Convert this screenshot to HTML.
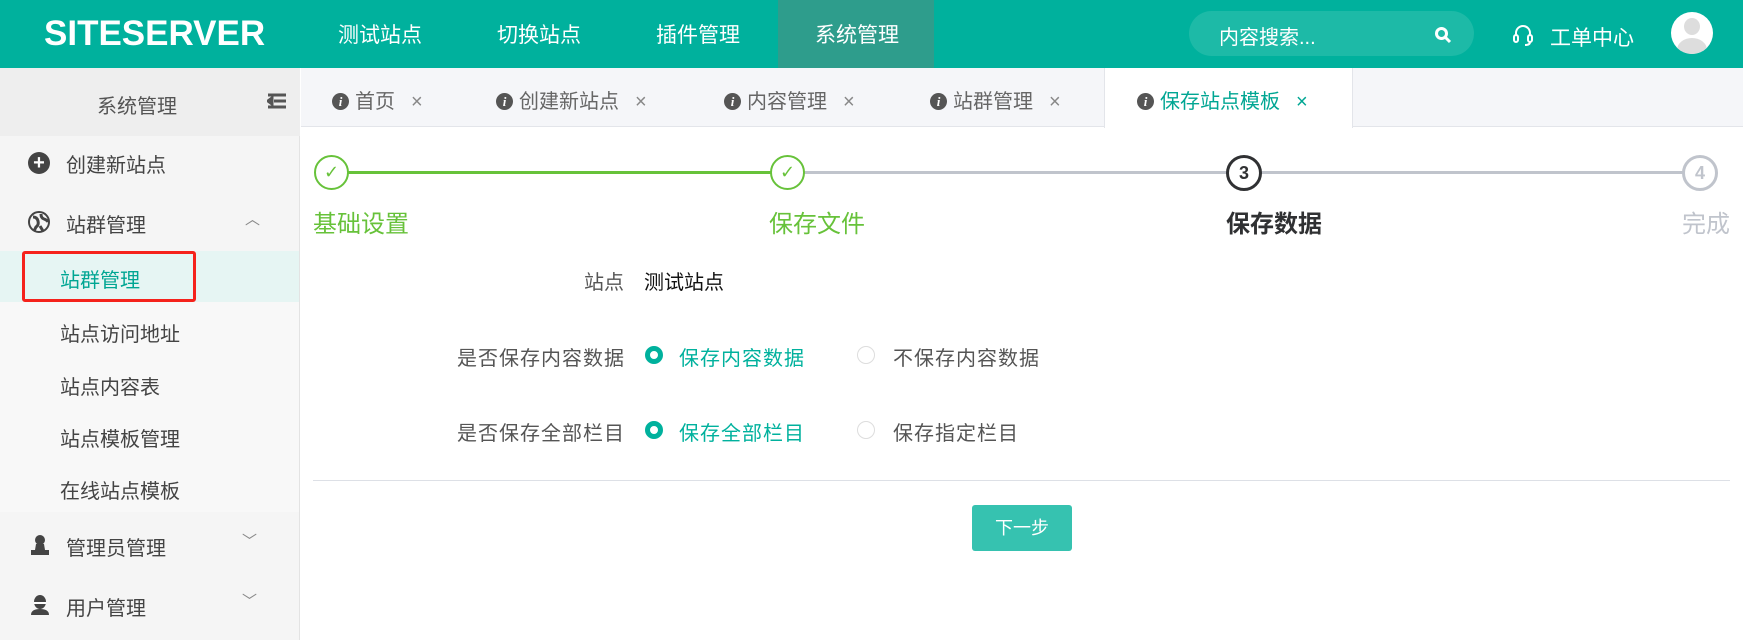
<!DOCTYPE html>
<html><head><meta charset="utf-8"><style>
*{margin:0;padding:0;box-sizing:border-box}
body{width:1743px;height:640px;overflow:hidden;background:#fff;font-family:"Liberation Sans","Noto Sans CJK SC",sans-serif;position:relative;color:#333}
.a{position:absolute;white-space:nowrap}
.hdr{left:0;top:0;width:1743px;height:68px;background:#00b19d}
.nav{color:#fff;font-size:21px;top:19px}
.side{left:0;top:68px;width:300px;height:572px;background:#f5f5f5;border-right:1px solid #e3e3e3}
.si{font-size:20px;color:#444}
.sub{font-size:20px;color:#444;left:60px}
.tab{font-size:20px;color:#666;top:85px}
.ic{display:inline-block;width:17px;height:17px;border-radius:50%;background:#555;color:#fff;font:italic bold 13px "Liberation Serif",serif;text-align:center;line-height:17px;vertical-align:2px;margin-right:6px}
.x{color:#888;margin-left:16px;font-size:20px;font-weight:300}
.step{font-size:24px;top:204px}
.lbl{font-size:20px;color:#555}
.rad{width:18px;height:18px;border-radius:50%}
</style></head><body>
<div class="a hdr"></div>
<div class="a" style="left:44px;top:14px;color:#fff;font:bold 35px 'Liberation Sans',sans-serif;letter-spacing:0px">SITESERVER</div>
<div class="a" style="left:778px;top:0;width:156px;height:68px;background:#2e9d8c"></div>
<div class="a nav" style="left:338px">测试站点</div>
<div class="a nav" style="left:497px">切换站点</div>
<div class="a nav" style="left:656px">插件管理</div>
<div class="a nav" style="left:815px">系统管理</div>
<div class="a" style="left:1189px;top:11px;width:285px;height:45px;border-radius:23px;background:#1dbaa7"></div>
<div class="a" style="left:1219px;top:21px;color:#fff;font-size:20px">内容搜索...</div>
<svg class="a" style="left:1434px;top:26px" width="18" height="18" viewBox="0 0 18 18"><circle cx="7.5" cy="7.5" r="5" fill="none" stroke="#fff" stroke-width="3"/><path d="M11 11l5 5" stroke="#fff" stroke-width="3"/></svg>
<svg class="a" style="left:1512px;top:23px" width="22" height="24" viewBox="0 0 22 24"><path d="M4 13V10a7 7 0 0 1 14 0v3" fill="none" stroke="#fff" stroke-width="2"/><rect x="2" y="12" width="4" height="7" rx="2" fill="none" stroke="#fff" stroke-width="2"/><rect x="16" y="12" width="4" height="7" rx="2" fill="none" stroke="#fff" stroke-width="2"/><path d="M18 19q0 3-5 3" fill="none" stroke="#fff" stroke-width="2"/></svg>
<div class="a nav" style="left:1550px;top:22px">工单中心</div>
<div class="a" style="left:1671px;top:12px;width:42px;height:42px;border-radius:50%;background:#fff;overflow:hidden"><div class="a" style="left:13px;top:6px;width:16px;height:17px;border-radius:50%;background:#ddd"></div><div class="a" style="left:6px;top:26px;width:30px;height:24px;border-radius:50%;background:#ddd"></div></div>

<div class="a side"></div>
<div class="a" style="left:0;top:68px;width:300px;height:68px;background:#eee"></div>
<div class="a si" style="left:97px;top:90px;color:#555">系统管理</div>
<svg class="a" style="left:267px;top:93px" width="20" height="16" viewBox="0 0 20 16"><path d="M1 2h18M7 8h12M1 14h18M5 5L1 8l4 3z" stroke="#555" stroke-width="3" fill="#555"/></svg>
<div class="a" style="left:28px;top:152px;width:22px;height:22px;border-radius:50%;background:#444;color:#fff;text-align:center;font:bold 20px/22px 'Liberation Sans'">+</div>
<div class="a si" style="left:66px;top:149px">创建新站点</div>
<svg class="a" style="left:28px;top:211px" width="22" height="22" viewBox="0 0 22 22"><circle cx="11" cy="11" r="10" fill="none" stroke="#444" stroke-width="2"/><path d="M5 6q4 0 5 4t-2 6l-2 4M13 3q0 4 3 5t4 3M12 15l3 5" stroke="#444" stroke-width="3" fill="none"/></svg>
<div class="a si" style="left:66px;top:209px">站群管理</div>
<div class="a" style="left:245px;top:208px;color:#888;font-size:15px">︿</div>
<div class="a" style="left:0;top:251px;width:299px;height:261px;background:#f8f8f8"></div>
<div class="a" style="left:0;top:251px;width:299px;height:51px;background:#e6f5f3"></div>
<div class="a" style="left:22px;top:251px;width:174px;height:51px;border:3px solid #f5221b;border-radius:3px"></div>
<div class="a sub" style="top:264px;color:#00a693">站群管理</div>
<div class="a sub" style="top:318px">站点访问地址</div>
<div class="a sub" style="top:371px">站点内容表</div>
<div class="a sub" style="top:423px">站点模板管理</div>
<div class="a sub" style="top:475px">在线站点模板</div>
<svg class="a" style="left:30px;top:534px" width="20" height="22" viewBox="0 0 20 22"><circle cx="10" cy="6" r="5" fill="#444"/><path d="M6 10h8l1 6h4v5H1v-5h4z" fill="#444"/></svg>
<div class="a si" style="left:66px;top:532px">管理员管理</div>
<div class="a" style="left:242px;top:530px;color:#888;font-size:15px">﹀</div>
<svg class="a" style="left:30px;top:594px" width="20" height="22" viewBox="0 0 20 22"><ellipse cx="10" cy="8" rx="6" ry="7" fill="#444"/><path d="M1 21q0-6 9-6t9 6z" fill="#444"/><rect x="4" y="8" width="12" height="2" fill="#fff"/></svg>
<div class="a si" style="left:66px;top:592px">用户管理</div>
<div class="a" style="left:242px;top:590px;color:#888;font-size:15px">﹀</div>

<div class="a" style="left:301px;top:68px;width:1442px;height:59px;background:#f5f6f9;border-bottom:1px solid #e3e5ea"></div>
<div class="a" style="left:1104px;top:68px;width:249px;height:60px;background:#fff;border-left:1px solid #e3e5ea;border-right:1px solid #e3e5ea"></div>
<div class="a tab" style="left:332px"><span class="ic">i</span>首页<span class="x">×</span></div>
<div class="a tab" style="left:496px"><span class="ic">i</span>创建新站点<span class="x">×</span></div>
<div class="a tab" style="left:724px"><span class="ic">i</span>内容管理<span class="x">×</span></div>
<div class="a tab" style="left:930px"><span class="ic">i</span>站群管理<span class="x">×</span></div>
<div class="a tab" style="left:1137px;color:#00a693"><span class="ic">i</span>保存站点模板<span class="x" style="color:#00a693">×</span></div>

<div class="a" style="left:348px;top:171px;width:440px;height:3px;background:#67c23a"></div>
<div class="a" style="left:804px;top:171px;width:880px;height:3px;background:#c0c4cc"></div>
<div class="a" style="left:314px;top:155px;width:35px;height:35px;border-radius:50%;border:2px solid #67c23a;background:#fff;color:#67c23a;text-align:center;font:18px/31px 'DejaVu Sans'">✓</div>
<div class="a" style="left:770px;top:155px;width:35px;height:35px;border-radius:50%;border:2px solid #67c23a;background:#fff;color:#67c23a;text-align:center;font:18px/31px 'DejaVu Sans'">✓</div>
<div class="a" style="left:1226px;top:155px;width:36px;height:36px;border-radius:50%;border:3px solid #303133;background:#fff;color:#303133;text-align:center;font:bold 18px/30px 'Liberation Sans'">3</div>
<div class="a" style="left:1682px;top:155px;width:36px;height:36px;border-radius:50%;border:3px solid #c0c4cc;background:#fff;color:#c0c4cc;text-align:center;font:bold 18px/30px 'Liberation Sans'">4</div>
<div class="a step" style="left:313px;color:#67c23a">基础设置</div>
<div class="a step" style="left:769px;color:#67c23a">保存文件</div>
<div class="a step" style="left:1226px;color:#303133;font-weight:bold">保存数据</div>
<div class="a step" style="left:1682px;color:#c0c4cc">完成</div>

<div class="a lbl" style="left:584px;top:266px">站点</div>
<div class="a lbl" style="left:644px;top:266px;color:#111">测试站点</div>
<div class="a lbl" style="left:457px;top:342px;letter-spacing:1px">是否保存内容数据</div>
<div class="a rad" style="left:645px;top:346px;border:5px solid #00b19d"></div>
<div class="a lbl" style="left:679px;top:342px;color:#00b19d;letter-spacing:1px">保存内容数据</div>
<div class="a rad" style="left:857px;top:346px;border:1px solid #ddd"></div>
<div class="a lbl" style="left:893px;top:342px;letter-spacing:1px">不保存内容数据</div>
<div class="a lbl" style="left:457px;top:417px;letter-spacing:1px">是否保存全部栏目</div>
<div class="a rad" style="left:645px;top:421px;border:5px solid #00b19d"></div>
<div class="a lbl" style="left:679px;top:417px;color:#00b19d;letter-spacing:1px">保存全部栏目</div>
<div class="a rad" style="left:857px;top:421px;border:1px solid #ddd"></div>
<div class="a lbl" style="left:893px;top:417px;letter-spacing:1px">保存指定栏目</div>
<div class="a" style="left:313px;top:480px;width:1417px;height:1px;background:#dde0e6"></div>
<div class="a" style="left:972px;top:505px;width:100px;height:46px;background:#36c2b0;border-radius:3px;color:#fff;font-size:18px;text-align:center;line-height:46px">下一步</div>
</body></html>
